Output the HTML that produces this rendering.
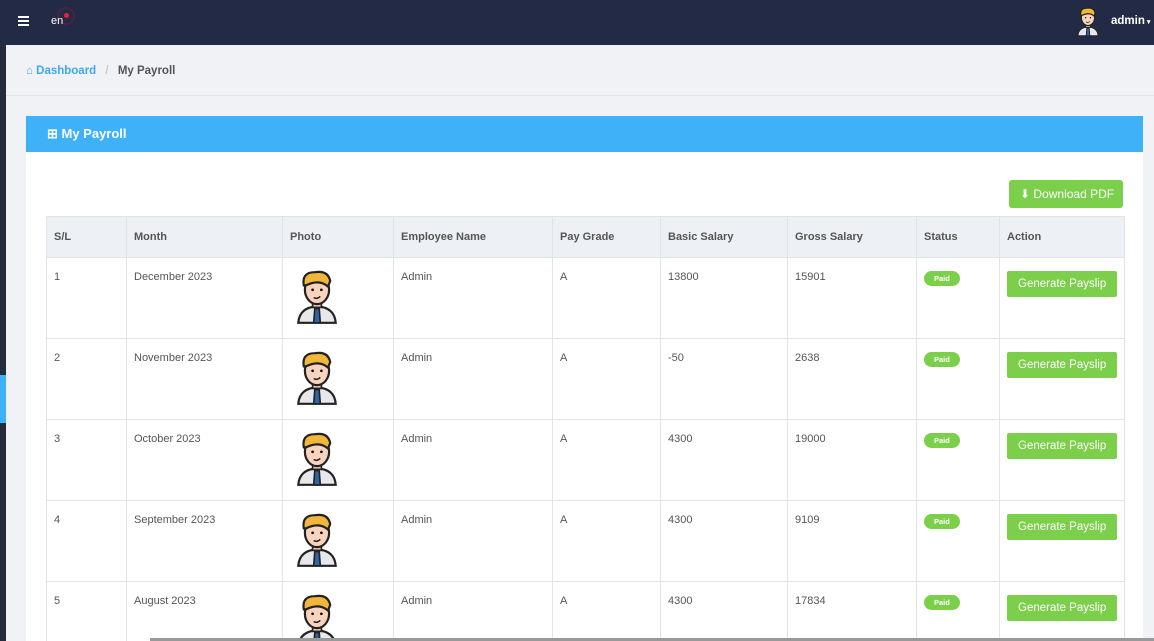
<!DOCTYPE html>
<html style="width:1154px;height:641px;overflow:hidden"><head><meta charset="utf-8"><style>
*{box-sizing:border-box;margin:0;padding:0}
body{width:1154px;height:641px;overflow:hidden;background:#f0f2f6;font-family:"Liberation Sans",sans-serif;position:relative}
.top{position:absolute;left:0;top:0;width:1154px;height:45px;background:#222a45}
.side{position:absolute;left:0;top:45px;width:6px;height:596px;background:#232d3b}
.side i{position:absolute;left:0;top:330px;width:6px;height:48px;background:#3fb1f8}
.bc{position:absolute;left:6px;top:45px;width:1148px;height:51px;border-bottom:1px solid #e0e3e8;font-size:11.5px;font-weight:bold;padding:20px 0 0 20px;color:#555}
.bc a{color:#3fa7f1}
.card{position:absolute;left:26px;top:116px;width:1117px;height:525px;background:#fff;overflow:hidden}
.ch{height:36px;background:#3fb1f8;color:#fff;font-weight:bold;font-size:13px;padding:10px 0 0 21px}
.dl{position:absolute;left:983px;top:64px;width:114px;height:28px;background:#7ccf4a;border-radius:3px;color:#fff;font-size:12px;padding:7px 0 0 11px;white-space:nowrap}
table{position:absolute;left:20px;top:100px;border-collapse:collapse;font-size:11px;color:#555;table-layout:fixed}
td,th{border:1px solid #e1e3e7;vertical-align:top;text-align:left;padding:0 7px;white-space:nowrap}
th{height:41px;background:#edf0f4;vertical-align:middle;font-weight:bold;color:#555}
td{height:81px;padding-top:13px}
.p{display:inline-block;background:#7ccf4a;color:#fff;font-size:7.5px;font-weight:bold;border-radius:8px;padding:3px 10px}
.g{display:inline-block;background:#7ccf4a;color:#fff;font-size:11.5px;border-radius:2px;padding:7px 11px;white-space:nowrap}
.av{margin:-1px 0 0 5px}
</style></head><body>
<div class="top">
<div style="position:absolute;left:18px;top:16px;width:11px;height:2px;background:#fff;box-shadow:0 4px #fff,0 8px #fff"></div>
<div style="position:absolute;left:57px;top:7px;width:18px;height:18px;border-radius:50%;border:2px solid #4a2440"></div>
<div style="position:absolute;left:64px;top:13px;width:5px;height:5px;border-radius:50%;background:#e5213f"></div>
<div style="position:absolute;left:51px;top:15px;color:#fff;font-size:11px">en</div>
<svg style="position:absolute;left:1076px;top:7px" width="24" height="30" viewBox="0 0 40 50"><use href="#av"/></svg>
<div style="position:absolute;left:1111px;top:15px;color:#fff;font-size:11.5px;font-weight:bold">admin<span style="font-size:7px"> ▾</span></div>
</div>
<div class="side"><i></i></div>
<div class="bc"><a>⌂ Dashboard</a> <span style="color:#ccc;margin:0 6px">/</span> My Payroll</div>
<svg width="0" height="0" style="position:absolute"><defs><g id="av">
<path d="M3 48 Q4 34 20 33 Q36 34 37 48 Z" fill="#e8e8ea" stroke="#222" stroke-width="2"/>
<path d="M18 35 L22 35 L23 48 L17 48 Z" fill="#2a66a8" stroke="#222" stroke-width="1.5"/>
<rect x="16" y="26" width="8" height="8" fill="#f6c8b0" stroke="#222" stroke-width="1.5"/>
<ellipse cx="20" cy="18" rx="11" ry="13" fill="#f8d4bf" stroke="#222" stroke-width="2"/>
<path d="M8 14 Q6 2 18 2 Q30 0 32 10 L30 15 Q22 8 10 14 Z" fill="#f2b63b" stroke="#222" stroke-width="2"/>
<circle cx="16" cy="18" r="1.2"/><circle cx="24" cy="18" r="1.2"/>
<path d="M17 25 Q20 27 23 24" stroke="#222" fill="none" stroke-width="1.3"/>
</g></defs></svg>
<div class="card">
<div class="ch">⊞ My Payroll</div>
<div class="dl">⬇ Download PDF</div>
<table>
<colgroup><col style="width:80px"><col style="width:156px"><col style="width:111px"><col style="width:159px"><col style="width:108px"><col style="width:127px"><col style="width:129px"><col style="width:83px"><col style="width:124px"></colgroup>
<tr><th>S/L</th><th>Month</th><th>Photo</th><th>Employee Name</th><th>Pay Grade</th><th>Basic Salary</th><th>Gross Salary</th><th>Status</th><th>Action</th></tr>
<tr><td>1</td><td>December 2023</td><td><svg class="av" width="44" height="55" viewBox="0 0 40 50"><use href="#av"/></svg></td><td>Admin</td><td>A</td><td>13800</td><td>15901</td><td><span class="p">Paid</span></td><td><span class="g">Generate Payslip</span></td></tr>
<tr><td>2</td><td>November 2023</td><td><svg class="av" width="44" height="55" viewBox="0 0 40 50"><use href="#av"/></svg></td><td>Admin</td><td>A</td><td>-50</td><td>2638</td><td><span class="p">Paid</span></td><td><span class="g">Generate Payslip</span></td></tr>
<tr><td>3</td><td>October 2023</td><td><svg class="av" width="44" height="55" viewBox="0 0 40 50"><use href="#av"/></svg></td><td>Admin</td><td>A</td><td>4300</td><td>19000</td><td><span class="p">Paid</span></td><td><span class="g">Generate Payslip</span></td></tr>
<tr><td>4</td><td>September 2023</td><td><svg class="av" width="44" height="55" viewBox="0 0 40 50"><use href="#av"/></svg></td><td>Admin</td><td>A</td><td>4300</td><td>9109</td><td><span class="p">Paid</span></td><td><span class="g">Generate Payslip</span></td></tr>
<tr><td>5</td><td>August 2023</td><td><svg class="av" width="44" height="55" viewBox="0 0 40 50"><use href="#av"/></svg></td><td>Admin</td><td>A</td><td>4300</td><td>17834</td><td><span class="p">Paid</span></td><td><span class="g">Generate Payslip</span></td></tr>
</table>
</div>
<div style="position:absolute;left:150px;top:638px;width:1004px;height:3px;background:#999"></div>
</body></html>
